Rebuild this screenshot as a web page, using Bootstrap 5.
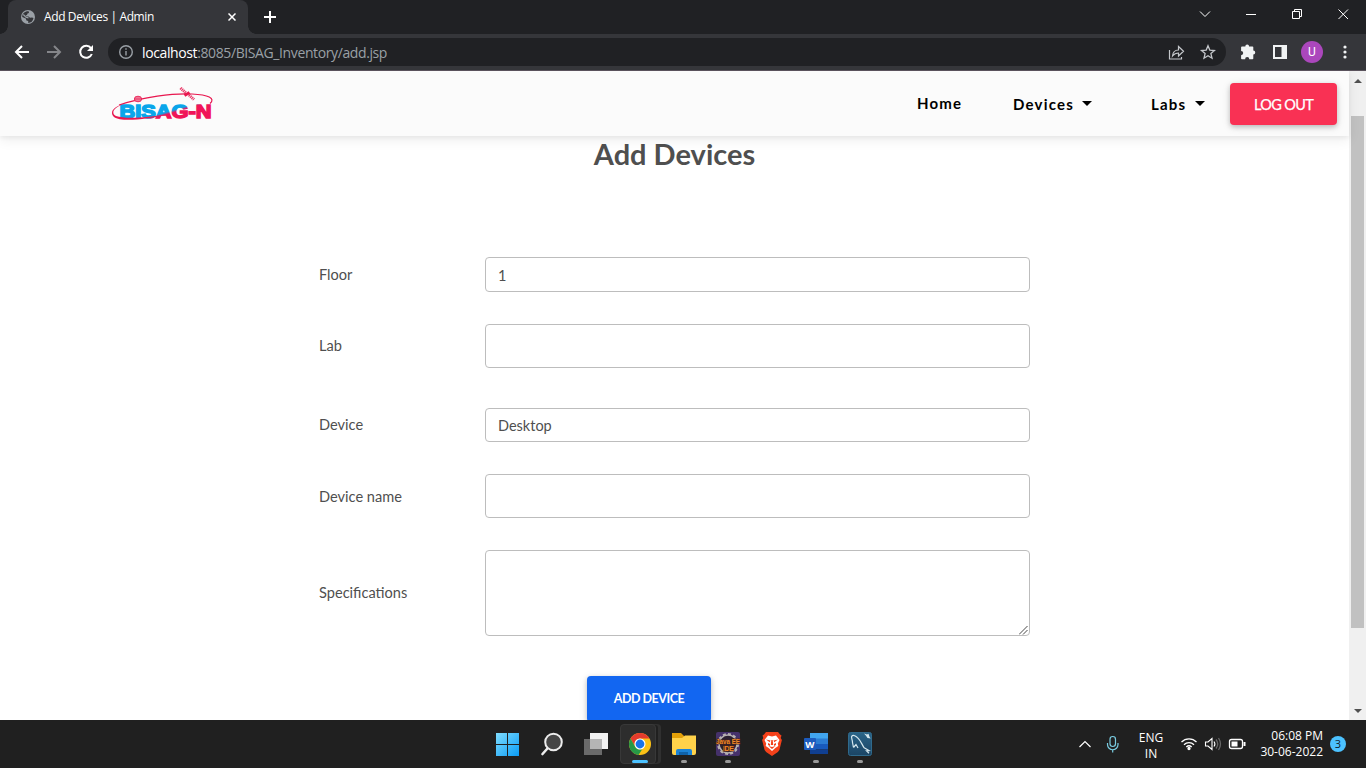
<!DOCTYPE html>
<html lang="en">
<head>
<meta charset="utf-8">
<meta name="viewport" content="width=device-width, initial-scale=1">
<title>Add Devices | Admin</title>
<link href="https://cdn.jsdelivr.net/npm/bootstrap@5.3.0/dist/css/bootstrap.min.css" rel="stylesheet">
<script src="https://cdn.jsdelivr.net/npm/bootstrap@5.3.0/dist/js/bootstrap.bundle.min.js" defer></script>
<style>
  body { height: 768px; overflow: hidden; font-family: Lato, "Liberation Sans", sans-serif; color: #4f4f4f; background: #fff; }
  svg { display: block; flex: none; }
  .ui { font-family: "Open Sans", "Noto Sans", sans-serif; }
  /* browser frame */
  .tabstrip { height: 34px; background: #202124; color: #fff; }
  .tab-active { width: 240px; margin-left: 8px; padding-left: 13px; background: #35363a; border-radius: 8px 8px 0 0; font-size: 12px; letter-spacing: -.39px; position: relative; }
  .tab-active::before, .tab-active::after { content: ""; position: absolute; bottom: 0; width: 8px; height: 8px; }
  .tab-active::before { left: -8px; background: radial-gradient(circle at 0 0, transparent 7.5px, #35363a 8px); }
  .tab-active::after { right: -8px; background: radial-gradient(circle at 100% 0, transparent 7.5px, #35363a 8px); }
  .tab-title { margin-left: 9px; }
  .tab-close { margin-right: 12px; }
  .tab-new { margin-left: 16px; }
  .toolbar { height: 37px; background: #35363a; border-bottom: 1px solid #5a525c; }
  .omnibox { width: 1118px; height: 28px; margin-left: 14px; border-radius: 14px; background: #202124; color: #9aa0a6; font-size: 14px; }
  .url { margin-left: 9px; letter-spacing: -.39px; }
  .avatar { width: 22px; height: 22px; margin-left: 12px; border-radius: 50%; background: #ab47bc; color: #fff; font-size: 12px; line-height: 22px; font-family: Roboto, sans-serif; }
  /* page */
  .viewport { height: 649px; overflow: hidden; }
  .topnav { height: 65px; background: #fbfbfb; box-shadow: 0 4px 12px 0 rgba(0,0,0,.07), 0 2px 4px rgba(0,0,0,.05); padding: 0 12px 0 111px; position: relative; }
  .menu-link { color: #000; font-weight: 700; font-size: 15px; letter-spacing: 1.2px; line-height: 20px; white-space: nowrap; }
  .menu-home { width: 96px; padding-bottom: 1px; }
  .menu-devices { width: 138px; }
  .menu-labs { width: 79px; }
  .tri { border: 5px solid transparent; border-top-color: #000; border-bottom: 0; display: inline-block; margin-left: 8.5px; }
  .btn-flat { color: #fff; border: 0; border-radius: 4px; box-shadow: 0 2px 5px rgba(0,0,0,.2), 0 2px 10px rgba(0,0,0,.1); line-height: 1; white-space: nowrap; }
  .btn-flat:hover { color: #fff; }
  .btn-logout { width: 107px; height: 42px; padding: 3px 0 0; background: #f93154; font-size: 14.5px; letter-spacing: -.65px; -webkit-text-stroke: .25px #fff; }
  .btn-logout:hover { background: #f93154; }
  .btn-add { width: 124px; height: 46px; margin-left: 268px; padding: 0; background: #1266f1; font-size: 12.5px; font-weight: 700; letter-spacing: -.5px; }
  h1 { font-size: 29px; line-height: 36px; font-weight: 700; height: 121px; }
  .entry { width: 711px; margin-left: 319px; }
  .entry label { width: 166px; font-size: 14.6px; }
  .label-low { padding-top: 1px; }
  .entry .form-control { width: 545px; border: 1px solid #bdbdbd; border-radius: 4px; color: #4f4f4f; font-size: 14.5px; padding: 1px 12px 0; }
  .h-select { height: 35px; }
  .h-select2 { height: 34px; }
  .h-text { height: 44px; }
  .h-area { height: 86px; resize: none; display: block; }
  .gap-row { margin-bottom: 32px; }
  .gap-wide { margin-bottom: 40px; }
  .grip { position: absolute; right: 2px; bottom: 1px; }
  .scrollbar { width: 17px; background: #f0f0f0; }
  .thumb { width: 13px; height: 512px; background: #c1c1c1; margin-top: 33px; }
  /* taskbar */
  .taskbar { height: 48px; background: #202020; color: #fff; font-size: 12px; line-height: 16px; }
  .apps { margin-left: 486px; }
  .app { width: 44px; height: 48px; position: relative; }
  .app .dot { position: absolute; left: 19px; top: 40px; width: 6px; height: 3px; border-radius: 2px; background: #999; }
  .app .dot.on { left: 14px; width: 16px; background: #4cc2ff; }
  .app.lit::before { content: ""; position: absolute; left: 2px; top: 4px; width: 36px; height: 40px; border-radius: 4px; background: #2d2d2d; border: 1px solid #383838; box-shadow: 3px 0 0 -1px #202020, 5px 0 0 0 #303030; }
  .lang { width: 40px; margin-left: 11px; }
  .clock { width: 77px; }
  .count { width: 16px; height: 16px; margin: 0 20px 0 7px; border-radius: 50%; background: #4cc2ff; color: #10202a; font-size: 11px; }
</style>
</head>
<body class="d-flex flex-column">

<!-- tab strip -->
<header class="tabstrip ui d-flex">
  <div class="tab-active d-flex align-items-center">
    <svg width="14" height="14" viewBox="0 0 14 14"><circle cx="7" cy="7" r="7" fill="#9aa0a6"/><path d="M7.500 1.300C8.500 2.300 8 3.300 6.500 3.500L6 5 4.500 5.500 5 6.500h2.500l1.500 1.300 2-.3 1.500.4C12 11 10 12.800 7.200 12.900V11L5.500 10.500l-.7-2L1.200 7C1.200 4 3.500 1.200 7.500 1.300z" fill="#35363a"/><path d="M2.300 4.500L5 7.300l2.500.5M9 3.500l2.500 1" stroke="#9aa0a6" stroke-width="1.200" fill="none"/></svg>
    <span class="tab-title">Add Devices | Admin</span>
    <svg class="tab-close ms-auto" width="8" height="8" viewBox="0 0 8 8" stroke="#fff" stroke-width="1.500"><path d="M.5.5l7 7M7.500.5l-7 7"/></svg>
  </div>
  <svg class="tab-new align-self-center" width="12" height="12" viewBox="0 0 12 12" stroke="#fff" stroke-width="2"><path d="M6 0v12M0 6h12"/></svg>
  <svg class="ms-auto" width="176" height="34" viewBox="1190 0 176 34" fill="none" stroke="#fff" stroke-width="1">
    <path d="M1200 11.500l5 5 5-5M1246 14.500h10M1292.500 11.500h7v7h-7zM1294.500 11.500v-2h7v7h-2M1338.500 9.500l9.500 9.500M1348 9.500l-9.500 9.500"/>
  </svg>
</header>

<!-- toolbar -->
<div class="toolbar ui d-flex align-items-center">
  <svg width="94" height="36" viewBox="0 34 94 36" fill="none" stroke="#fff" stroke-width="2">
    <path d="M29 52H16.500M22 46l-6 6 6 6"/><path stroke="#85868a" d="M47 52h12.500M54 46l6 6-6 6"/>
    <path d="M91 48.200A6 6 0 1 0 91.800 54"/><path d="M93 45v6h-6z" fill="#fff" stroke="none"/>
  </svg>
  <div class="omnibox d-flex align-items-center">
    <svg style="margin-left:11px" width="14" height="14" viewBox="0 0 14 14" fill="none" stroke="#9aa0a6" stroke-width="1.400"><circle cx="7" cy="7" r="6.300"/><path d="M7 6v4.500M7 3.300v1.500"/></svg>
    <span class="url"><span class="text-white">localhost</span>:8085/BISAG_Inventory/add.jsp</span>
    <svg class="ms-auto" style="margin-right:10px" width="48" height="18" viewBox="1168 43 48 18" fill="none" stroke="#c4c7cb" stroke-width="1.200">
      <path d="M1169.500 50v9h12v-2M1172.500 56c.4-4 3-6 6-6v-3.500l5 4.800-5 4.700v-3c-2.600 0-4.300.8-6 3z"/>
      <path stroke-width="1.300" d="M1208 45.800l1.800 4.300 4.700.4-3.600 3.100 1.100 4.600-4-2.500-4 2.500 1.100-4.600-3.600-3.100 4.700-.4z"/>
    </svg>
  </div>
  <svg style="margin-left:13px" width="50" height="18" viewBox="1239 43 50 18">
    <path fill="#f1f3f4" d="M1242 46.500h3.300a1.900 1.900 0 0 1 3.800 0h3.400q.8 0 .8.800v3.200a1.950 1.950 0 0 1 0 3.900v4q0 .8-.8.800h-3.200a2.100 2.100 0 0 0-4.200 0H1242q-.9 0-.9-.8v-3.200a2.100 2.100 0 0 0 0-4.200v-3.700q0-.8.900-.8z"/>
    <path fill="#f1f3f4" fill-rule="evenodd" d="M1273 45h14v14h-14zM1275 47v10h6.500V47z"/>
  </svg>
  <div class="avatar text-center">U</div>
  <svg style="margin-left:20px" width="4" height="16" viewBox="0 0 4 16" fill="#f1f3f4"><circle cx="2" cy="3" r="1.600"/><circle cx="2" cy="8" r="1.600"/><circle cx="2" cy="13" r="1.600"/></svg>
</div>

<div class="viewport d-flex">
  <main class="flex-grow-1">
    <nav class="topnav d-flex align-items-center">
      <svg width="104" height="38" viewBox="111 86 104 38">
        <defs><linearGradient id="brandFill" gradientUnits="userSpaceOnUse" x1="0" y1="0" x2="58" y2="192"><stop offset=".78" stop-color="#0aa5ea"/><stop offset=".792" stop-color="#f01458"/></linearGradient></defs>
        <g font-family="Liberation Sans" font-weight="700" font-size="19"><text x="119.500" y="119.300" textLength="92" lengthAdjust="spacingAndGlyphs" fill="url(#brandFill)" stroke="url(#brandFill)" stroke-width="1.500">BISAG-N</text></g>
        <path fill="#e8174f" d="M122 105.500c-9 4-11 9-6 11.500 9 3 29 2 54-2-26 6-49 8-56 3-5-5 0-10 8-12.500z"/>
        <path d="M119 106c24-8 54-12 73-11 16 .8 24 4 18 9.500" fill="none" stroke="#e8174f" stroke-width="1.200"/>
        <ellipse cx="138" cy="100" rx="3.700" ry="2.800" fill="#f6a0b5" stroke="#e8174f" stroke-width=".8"/><path d="M134 100h8M138 97v6M136 97.500v5M140 97.500v5" stroke="#e8174f" stroke-width=".6"/>
        <path d="M180.500 89l5.500 5M189 96l5 4.500" stroke="#e8174f" stroke-width="3" stroke-dasharray="1.300 .6" opacity=".85"/><path d="M184.500 96.500l5-3" stroke="#e8174f" stroke-width="3"/>
      </svg>
      <a class="menu-link menu-home text-decoration-none ms-auto">Home</a>
      <a class="menu-link menu-devices text-decoration-none d-flex align-items-center"><span>Devices</span><i class="tri"></i></a>
      <a class="menu-link menu-labs text-decoration-none d-flex align-items-center"><span>Labs</span><i class="tri"></i></a>
      <button class="btn btn-flat btn-logout">LOG OUT</button>
    </nav>

    <h1 class="text-center m-0">Add Devices</h1>

    <form class="entry">
      <div class="d-flex align-items-center gap-row"><label>Floor</label><input class="form-control h-select" value="1"></div>
      <div class="d-flex align-items-center gap-wide"><label>Lab</label><input class="form-control h-text"></div>
      <div class="d-flex align-items-center gap-row"><label>Device</label><input class="form-control h-select2" value="Desktop"></div>
      <div class="d-flex align-items-center gap-row"><label class="label-low">Device name</label><input class="form-control h-text"></div>
      <div class="d-flex align-items-center gap-wide"><label>Specifications</label>
        <div class="position-relative"><textarea class="form-control h-area"></textarea>
          <svg class="grip" width="9" height="9" viewBox="0 0 9 9" stroke="#333" stroke-width=".9"><path d="M0 8.500L8.500 0M4 8.500L8.500 4"/></svg></div>
      </div>
      <button type="button" class="btn btn-flat btn-add">ADD DEVICE</button>
    </form>
  </main>
  <div class="scrollbar d-flex flex-column align-items-center">
    <svg width="8" height="4" viewBox="0 0 8 4" style="margin-top:8px"><path d="M0 4l4-4 4 4z" fill="#505050"/></svg>
    <div class="thumb"></div>
    <svg class="mt-auto" style="margin-bottom:7px" width="8" height="4" viewBox="0 0 8 4"><path d="M0 0l4 4 4-4z" fill="#505050"/></svg>
  </div>
</div>

<!-- taskbar -->
<footer class="taskbar ui d-flex">
  <div class="apps d-flex">
    <div class="app"><svg width="44" height="48" viewBox="0 0 44 48"><defs><linearGradient id="win" x2="1" y2="1"><stop stop-color="#7fdcff"/><stop offset="1" stop-color="#0a9cf5"/></linearGradient></defs><path fill="url(#win)" d="M10 13h11v11H10zM22 13h11v11H22zM10 25h11v11H10zM22 25h11v11H22z"/></svg></div>
    <div class="app"><svg width="44" height="48" viewBox="0 0 44 48" stroke="#ececec" stroke-linecap="round"><circle cx="23.500" cy="22" r="8.300" fill="#454545" stroke-width="2"/><path stroke-width="2.600" d="M17 29l-4.500 5"/></svg></div>
    <div class="app"><svg width="44" height="48" viewBox="0 0 44 48"><path fill="#f2f2f2" d="M16 13h18v16H16z"/><path fill="#6a6a6a" d="M10 19h18v16H10z"/><path fill="#b5b5b5" d="M16 19h12v10H16z"/></svg></div>
    <div class="app lit"><svg class="position-relative" width="44" height="48" viewBox="0 0 44 48"><circle cx="22" cy="24" r="11" fill="#fbc116"/><path fill="#e33b2e" d="M12.500 18.500a11 11 0 0 1 19 0H22a5.500 5.500 0 0 0-4.800 8.200z"/><path fill="#279847" d="M12.500 18.500l4.700 8.200a5.500 5.500 0 0 0 7.200 2.200L20.500 35a11 11 0 0 1-8-16.500z"/><circle cx="22" cy="24" r="5.500" fill="#fff"/><circle cx="22" cy="24" r="4.400" fill="#1a73e8"/></svg><i class="dot on"></i></div>
    <div class="app"><svg width="44" height="48" viewBox="0 0 44 48"><path fill="#e3a008" d="M10 13h9l3 3v5H10z"/><path fill="#ffd24a" d="M10 18h10l3-2.500h11V33q0 2-2 2H12q-2 0-2-2z"/><path fill="#1b83d6" d="M14 35v-4q0-2 2-2h12q2 0 2 2v4z"/><path fill="#0f62a8" d="M17 32h9v3h-9z"/></svg><i class="dot"></i></div>
    <div class="app"><svg width="44" height="48" viewBox="0 0 44 48"><rect x="10" y="12" width="24" height="24" rx="2" fill="#45316b"/><circle cx="22" cy="24" r="9" fill="#2c2032" stroke="#b5b0b0" stroke-width="1.500"/><circle cx="22" cy="24" r="10" fill="none" stroke="#b5b0b0" stroke-width="2" stroke-dasharray="3 2.200"/><g fill="#f08a2c" font-family="Liberation Sans" font-weight="700" font-size="7.500" stroke="#4a2412" stroke-width="1.200" paint-order="stroke"><text x="10" y="23.500" textLength="24" lengthAdjust="spacingAndGlyphs">Java EE</text><text x="17" y="31" textLength="11">IDE</text></g></svg><i class="dot"></i></div>
    <div class="app"><svg width="44" height="48" viewBox="0 0 44 48"><path fill="#f4411a" d="M16 12h12l2 2.500 1.500 1-.8 2.500 1.200 2-2.500 10-1.500 2L22 36l-5.900-4-1.500-2-2.500-10 1.200-2-.8-2.500 1.500-1z"/><path fill="#fff" d="M18 15.500l4 1 4-1 3.500 4.500-1.700 3.500.5 2.500-3 2-3.300 3-3.300-3-3-2 .5-2.500-1.700-3.500z"/><path fill="#f4411a" d="M16 19.500l4.500 1-.8 1.700zM28 19.500l-4.500 1 .8 1.700zM18.500 26l3.500 1 3.500-1-3.500 3zM21.300 20h1.400l.5 5h-2.400zM18 23l2 1v2l-2-1zM26 23l-2 1v2l2-1z"/></svg></div>
    <div class="app"><svg width="44" height="48" viewBox="0 0 44 48"><path fill="#41a5ee" d="M16 13h18v6H16z"/><path fill="#2b7cd3" d="M16 18.500h18V24H16z"/><path fill="#185abd" d="M16 24h18v5.500H16z"/><path fill="#103f91" d="M16 29.500h18V34H16z"/><rect x="10" y="18" width="12" height="12" rx="1" fill="#1c5bbd"/><text x="11.300" y="27.500" font-family="Open Sans" font-weight="700" font-size="9.500" fill="#fff">W</text></svg><i class="dot"></i></div>
    <div class="app"><svg width="44" height="48" viewBox="0 0 44 48"><defs><linearGradient id="sea" x2="0" y2="1"><stop stop-color="#2a6488"/><stop offset="1" stop-color="#1b4464"/></linearGradient></defs><rect x="10.500" y="12.500" width="23" height="23" rx="2" fill="url(#sea)" stroke="#2f6a8c"/><path fill="none" stroke="#d5e7ee" stroke-width="1.200" d="M15.500 27.500l-1-5c0-3-1.500-4.500-.8-6.200 1.500-2 4.500 0 6.500 2 3 3 4 7 6 9.500l4.800 2.700-2.600.3 2.600 2.500M15.500 27.500l2.500-3 2 3.500"/><path fill="#d5e7ee" d="M26 13.500l3 1 1.500-.7 1 3 1.200 1.700-3.200-.5-1.500-2.300z"/></svg><i class="dot"></i></div>
  </div>
  <div class="ms-auto d-flex align-items-center">
    <svg width="41" height="48" viewBox="1079 720 41 48" fill="none" stroke="#fff" stroke-width="1.200"><path d="M1079.500 747l5.500-5.500 5.500 5.500"/><g stroke="#79cbe0"><rect x="1110" y="736.500" width="5.500" height="10" rx="2.700"/><path d="M1107.500 743v1.500a5.200 5.200 0 0 0 10.500 0V743M1112.700 749.500v3"/></g></svg>
    <div class="lang text-center pt-1">ENG<br>IN</div>
    <svg style="margin-left:9px" width="66" height="48" viewBox="1180 720 66 48" fill="none" stroke="#fff" stroke-width="1.300">
      <path d="M1181.500 742a10.500 10.500 0 0 1 15 0M1184 744.700a7 7 0 0 1 10 0M1186.300 747a4 4 0 0 1 5.400 0"/><circle cx="1189" cy="748.500" r="1" fill="#fff"/>
      <path stroke-width="1.100" d="M1205.500 742h2.500l4-3.500v11l-4-3.500h-2.500zM1214 741.500q1.800 2.500 0 5"/><path stroke="#666" d="M1216 739.500q3.500 4.500 0 9M1218.500 738q4 6 0 12"/>
      <rect x="1229.500" y="739.500" width="13" height="9" rx="2"/><path stroke-width="2" d="M1244.500 742v4"/><path fill="#fff" stroke="none" d="M1231.500 741.500h6v5h-6z"/>
    </svg>
    <div class="clock text-end">06:08 PM<br>30-06-2022</div>
    <div class="count d-flex align-items-center justify-content-center">3</div>
  </div>
</footer>
</body>
</html>
